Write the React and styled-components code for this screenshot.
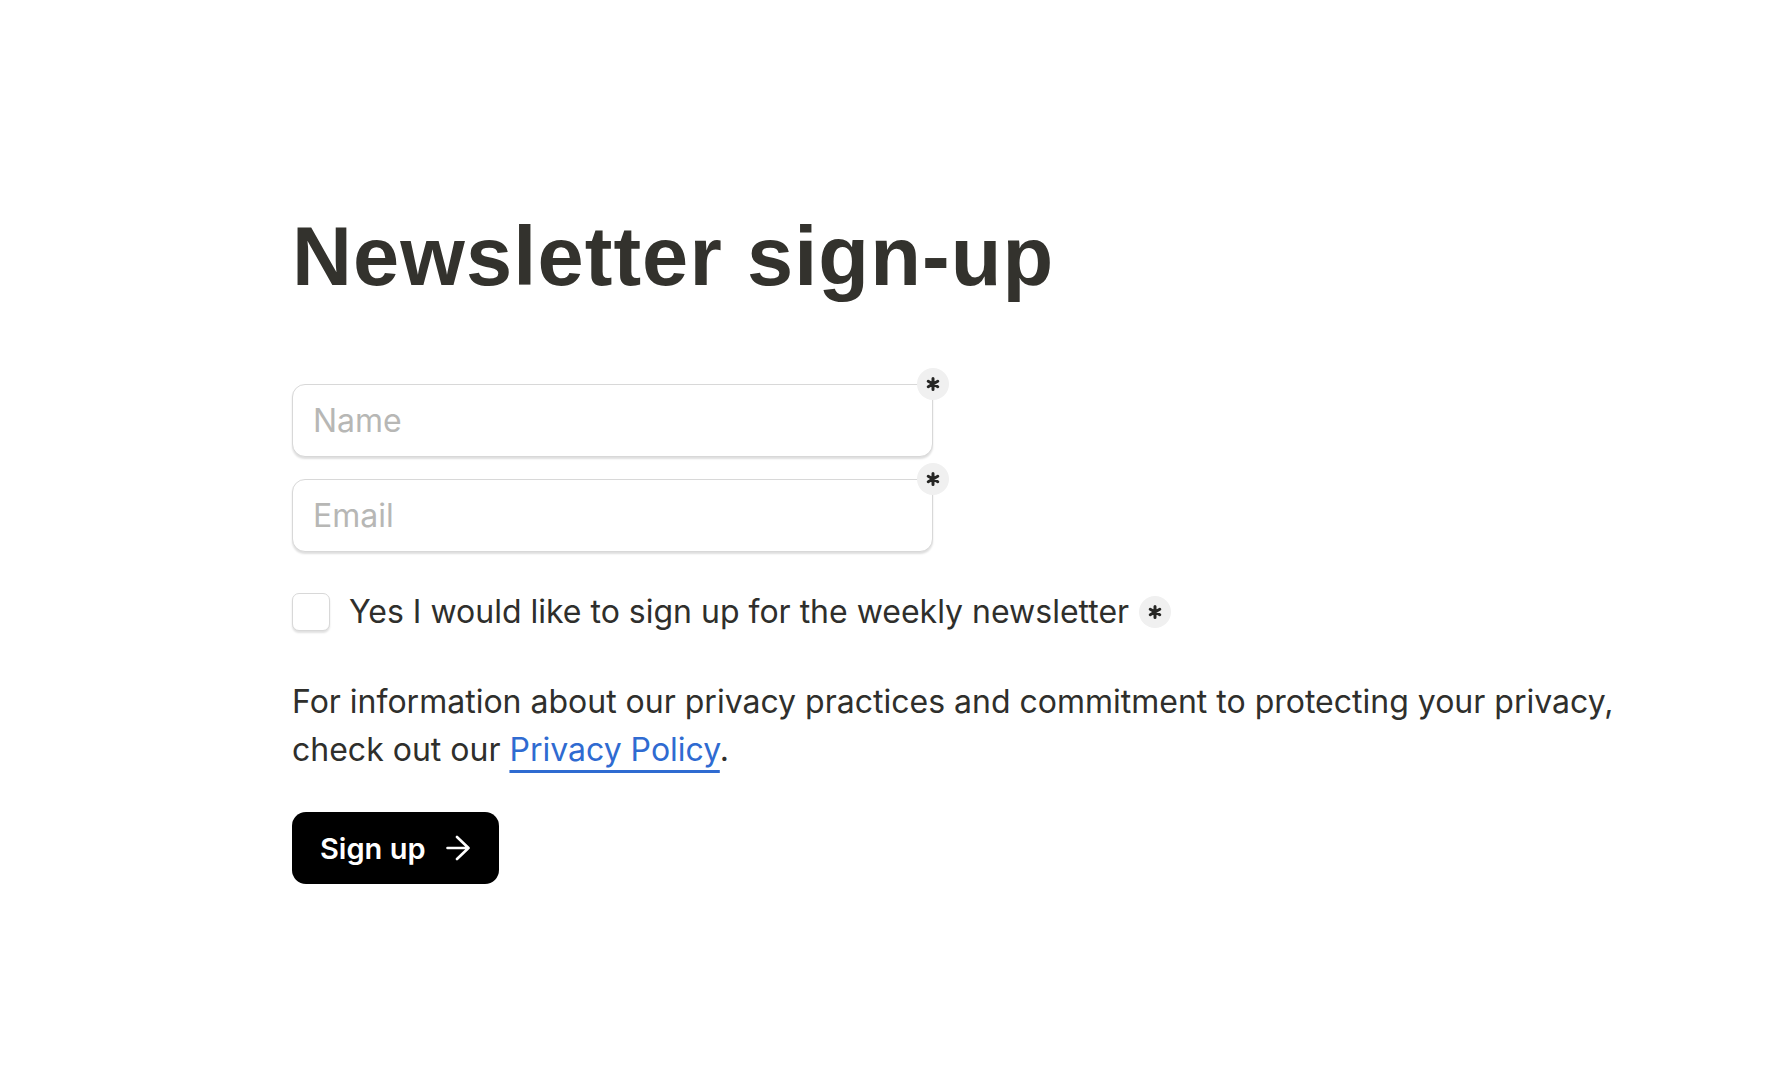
import React from "react"
import styled, { createGlobalStyle } from "styled-components"

const GlobalStyle = createGlobalStyle`
  html, body {
    margin: 0;
    padding: 0;
    background: #ffffff;
  }
  body {
    font-family: Inter, "Noto Sans", sans-serif;
    color: #2f2f2c;
  }
`

const Page = styled.main`
  padding: 215px 0 0 292px;
  min-height: 1090px;
  box-sizing: border-box;
`

const Content = styled.div`
  max-width: 1370px;
  display: flex;
  flex-direction: column;
  align-items: flex-start;
`

const Title = styled.h1`
  margin: 0 0 86px 0;
  font-family: "Liberation Sans", Arial, sans-serif;
  font-weight: 700;
  font-size: 83px;
  line-height: 1;
  letter-spacing: 1.1px;
  color: #33322d;
`

const Fields = styled.div`
  display: flex;
  flex-direction: column;
  gap: 22px;
`

const Field = styled.div`
  position: relative;
  width: 641px;
`

const Input = styled.input`
  display: block;
  box-sizing: border-box;
  width: 100%;
  height: 73px;
  padding: 0 20px;
  border: 1.5px solid #d8d8d8;
  border-radius: 13px;
  box-shadow: 0 2px 2px rgba(0, 0, 0, 0.13);
  font-family: Inter, sans-serif;
  font-size: 32px;
  color: #2f2f2c;
  background: #fff;
  outline: none;
  &::placeholder {
    color: #b7b7b5;
  }
`

const Required = styled.span`
  display: inline-flex;
  align-items: center;
  justify-content: center;
  flex: none;
  width: 32px;
  height: 32px;
  border-radius: 50%;
  background: #f0f0f0;
  ${p => p.$corner && `
    position: absolute;
    top: -16px;
    right: -16px;
  `}
`

const CheckRow = styled.label`
  display: flex;
  align-items: center;
  margin-top: 41px;
  font-size: 32px;
  line-height: 38px;
  color: #2f2f2c;
`

const Box = styled.input`
  appearance: none;
  margin: 0 19px 0 0;
  width: 38px;
  height: 38px;
  border: 1.5px solid #d8d8d8;
  border-radius: 7px;
  box-shadow: 0 2px 2px rgba(0, 0, 0, 0.12);
  background: #fff;
`

const Label = styled.span`
  margin-right: 10px;
`

const Note = styled.p`
  margin: 47px 0 0;
  font-size: 32px;
  line-height: 48px;
  color: #2f2f2c;
`

const Link = styled.a`
  color: #2f6bd1;
  text-decoration: underline;
  text-decoration-thickness: 2.5px;
  text-underline-offset: 9px;
`

const Button = styled.button`
  margin-top: 38px;
  display: inline-flex;
  align-items: center;
  gap: 20px;
  height: 72px;
  padding: 0 29px 0 28px;
  border: none;
  border-radius: 14px;
  background: #000;
  color: #fff;
  font-family: Inter, sans-serif;
  font-weight: 600;
  font-size: 29px;
  cursor: pointer;
`

function Star() {
  return (
    <svg width="14" height="14" viewBox="0 0 14 14" fill="none" stroke="#262624" strokeWidth="3" strokeLinecap="round">
      <path d="M7 1.5v11M2.24 4.25l9.52 5.5M2.24 9.75l9.52-5.5" />
    </svg>
  )
}

function Arrow() {
  return (
    <svg width="24" height="26" viewBox="0 0 24 26" fill="none" stroke="#fff" strokeWidth="2.6" strokeLinecap="round" strokeLinejoin="round">
      <path d="M1.5 13h21M11 2l11.5 11L11 24" />
    </svg>
  )
}

export default function App() {
  return (
    <Page>
      <GlobalStyle />
      <Content>
        <Title>Newsletter sign-up</Title>
        <Fields>
          <Field>
            <Input type="text" placeholder="Name" />
            <Required $corner><Star /></Required>
          </Field>
          <Field>
            <Input type="email" placeholder="Email" />
            <Required $corner><Star /></Required>
          </Field>
        </Fields>
        <CheckRow>
          <Box type="checkbox" />
          <Label>Yes I would like to sign up for the weekly newsletter</Label>
          <Required><Star /></Required>
        </CheckRow>
        <Note>
          For information about our privacy practices and commitment to protecting your privacy, check out our <Link href="#">Privacy Policy</Link>.
        </Note>
        <Button type="submit">
          Sign up
          <Arrow />
        </Button>
      </Content>
    </Page>
  )
}
